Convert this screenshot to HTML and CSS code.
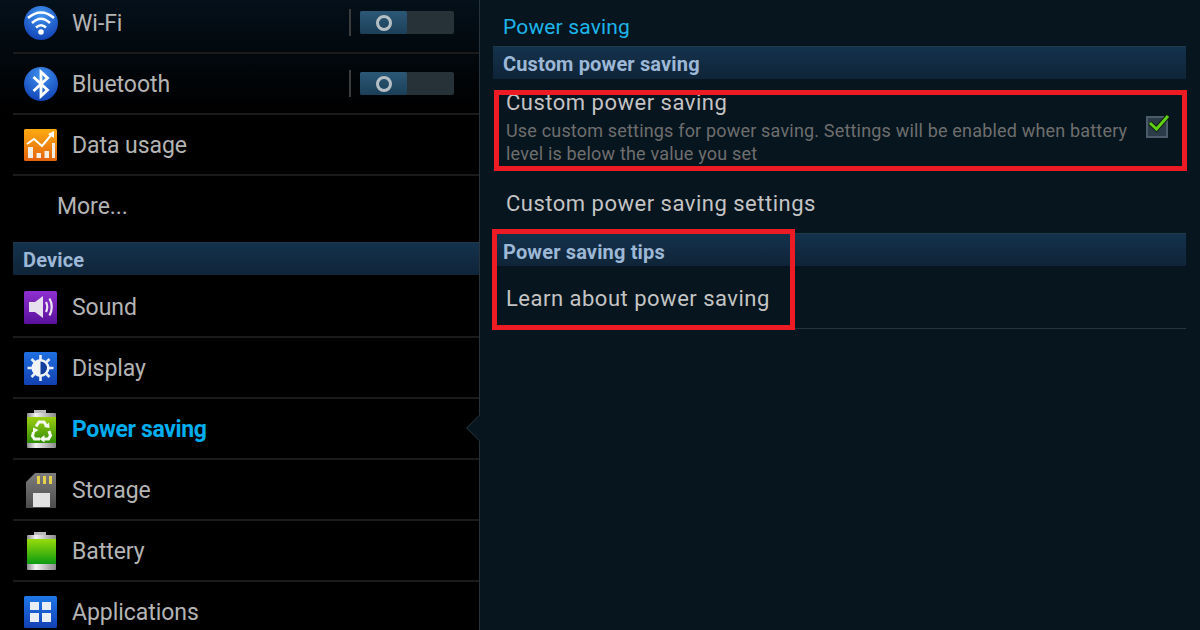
FILE: index.html
```html
<!DOCTYPE html>
<html lang="en">
<head>
    <meta charset="UTF-8">
    <meta name="viewport" content="width=device-width, initial-scale=1.0">
    <title>Power saving</title>
    <link rel="stylesheet" href="styles.css">
</head>
<body>
    <div class="screen">
        <div class="sidebar">
            <div class="menu-row">
                <svg class="icon" viewBox="0 0 40 40">
                    <defs><radialGradient id="wifiBlue" cx="50%" cy="25%" r="80%"><stop offset="0" stop-color="#3f93ee"/><stop offset="1" stop-color="#0f3fb4"/></radialGradient></defs>
                    <circle cx="20" cy="20" r="17" fill="url(#wifiBlue)"/>
                    <path d="M7 15 Q20 4 33 15 M11 20 Q20 11.500 29 20 M15 24.500 Q20 20 25 24.500" fill="none" stroke="#fff" stroke-width="2.600"/>
                    <circle cx="20" cy="29" r="2.800" fill="#fff"/>
                </svg>
                <span class="menu-label">Wi-Fi</span>
                <div class="switch-wrap">
                    <div class="switch"><div class="switch-on"><span class="ring"></span></div></div>
                </div>
            </div>
            <div class="menu-row">
                <svg class="icon" viewBox="0 0 40 40">
                    <defs><radialGradient id="btBlue" cx="50%" cy="25%" r="80%"><stop offset="0" stop-color="#3f93ee"/><stop offset="1" stop-color="#0f3fb4"/></radialGradient></defs>
                    <circle cx="20" cy="20" r="17" fill="url(#btBlue)"/>
                    <path d="M12.500 13 L26.500 26 L20 32 L20 8 L26.500 14 L12.500 27" fill="none" stroke="#fff" stroke-width="2.800"/>
                </svg>
                <span class="menu-label">Bluetooth</span>
                <div class="switch-wrap">
                    <div class="switch"><div class="switch-on"><span class="ring"></span></div></div>
                </div>
            </div>
            <div class="menu-row">
                <svg class="icon" viewBox="0 0 40 40">
                    <defs><linearGradient id="dataOrange" x1="0" y1="0" x2="0" y2="1"><stop offset="0" stop-color="#fcab10"/><stop offset="1" stop-color="#e4620c"/></linearGradient></defs>
                    <rect x="3" y="4" width="33" height="32" rx="1.500" fill="url(#dataOrange)"/>
                    <path d="M7 33 V22 H12 V33 Z M15.500 33 V28 H20 V33 Z M23.500 33 V26 H28 V33 Z M31 33 V18 H34 V33 Z" fill="#f3ece2"/>
                    <path d="M6 19 L13 14 L21 21 L31 9" fill="none" stroke="#fff" stroke-width="2"/>
                    <path d="M27 9 L33 6 L33 13 Z" fill="#fff"/>
                </svg>
                <span class="menu-label">Data usage</span>
            </div>
            <div class="menu-row menu-row-plain">
                <span class="menu-label">More...</span>
            </div>

            <div class="section-head section-head-side">Device</div>

            <div class="menu-row">
                <svg class="icon" viewBox="0 0 40 40">
                    <defs><linearGradient id="soundPurple" x1="0" y1="0" x2="0" y2="1"><stop offset="0" stop-color="#8e2fd0"/><stop offset="1" stop-color="#5a119c"/></linearGradient></defs>
                    <rect x="3" y="4" width="33" height="33" rx="1.500" fill="url(#soundPurple)"/>
                    <path d="M8 15 H14 L22 9 V31 L14 25 H8 Z" fill="#e6e0ee"/>
                    <path d="M25 15 Q27.500 20 25 25 M28.500 11.500 Q33 20 28.500 28.500" fill="none" stroke="#ece6f2" stroke-width="2.200"/>
                </svg>
                <span class="menu-label">Sound</span>
            </div>
            <div class="menu-row">
                <svg class="icon" viewBox="0 0 40 40">
                    <defs><linearGradient id="displayBlue" x1="0" y1="0" x2="0" y2="1"><stop offset="0" stop-color="#1f6fe0"/><stop offset="1" stop-color="#1240b0"/></linearGradient></defs>
                    <rect x="3" y="4" width="33" height="33" rx="1.500" fill="url(#displayBlue)"/>
                    <path d="M19.500 7 V33 M6.500 20 H32.500 M10.500 11 L28.500 29 M28.500 11 L10.500 29" stroke="#e8edf5" stroke-width="2.600"/>
                    <circle cx="19.500" cy="20" r="9" fill="#f1f3f6"/>
                    <path d="M19.500 13.500 A6.500 6.500 0 0 1 19.500 26.500 Z" fill="#123f9e"/>
                </svg>
                <span class="menu-label">Display</span>
            </div>
            <div class="menu-row menu-row-active">
                <svg class="icon" viewBox="0 0 40 40">
                    <defs>
                        <linearGradient id="recycleMetal" x1="0" y1="0" x2="1" y2="0"><stop offset="0" stop-color="#8d8d8d"/><stop offset=".3" stop-color="#f2f2f2"/><stop offset="1" stop-color="#8a8a8a"/></linearGradient>
                        <linearGradient id="recycleGreen" x1="0" y1="0" x2="0" y2="1"><stop offset="0" stop-color="#9ccf10"/><stop offset="1" stop-color="#2f8c06"/></linearGradient>
                    </defs>
                    <rect x="13" y="1" width="12" height="4" fill="#b9b9b9"/>
                    <rect x="6" y="4" width="29" height="35" rx="1" fill="url(#recycleMetal)"/>
                    <rect x="6" y="8" width="29" height="26" fill="url(#recycleGreen)"/>
                    <path d="M15 17.500 L18 13 H23 L25.500 17 M12.500 23 L11.500 27 L13.500 30 H19 M28 22 L29.500 26.500 L27.500 30 H23" fill="none" stroke="#f4f8ee" stroke-width="3"/>
                    <path d="M23 18 L28.500 19 L28 13.500 Z M12 18.500 L17.500 21 L12 24.500 Z M23.500 26 L18.500 30 L23.500 33.500 Z" fill="#f4f8ee"/>
                </svg>
                <span class="menu-label">Power saving</span>
            </div>
            <div class="menu-row">
                <svg class="icon" viewBox="0 0 40 40">
                    <defs><linearGradient id="sdGrey" x1="0" y1="0" x2="0" y2="1"><stop offset="0" stop-color="#7d7d7d"/><stop offset="1" stop-color="#4c4c4c"/></linearGradient></defs>
                    <path d="M14 3 H35 V38 H5 V12 Z" fill="url(#sdGrey)"/>
                    <path d="M16 6 H19 V14 H16 Z M22 6 H25 V14 H22 Z M28 6 H31 V14 H28 Z" fill="#e6d24a"/>
                    <rect x="12" y="23" width="17" height="14" fill="#e2e2e2"/>
                </svg>
                <span class="menu-label">Storage</span>
            </div>
            <div class="menu-row">
                <svg class="icon" viewBox="0 0 40 40">
                    <defs>
                        <linearGradient id="battMetal" x1="0" y1="0" x2="1" y2="0"><stop offset="0" stop-color="#8d8d8d"/><stop offset=".3" stop-color="#f2f2f2"/><stop offset="1" stop-color="#8a8a8a"/></linearGradient>
                        <linearGradient id="battGreen" x1="0" y1="0" x2="0" y2="1"><stop offset="0" stop-color="#98dc0a"/><stop offset="1" stop-color="#0c9a12"/></linearGradient>
                    </defs>
                    <rect x="13" y="1" width="12" height="4" fill="#b9b9b9"/>
                    <rect x="6" y="4" width="29" height="35" rx="1" fill="url(#battMetal)"/>
                    <rect x="6" y="8" width="29" height="25" fill="url(#battGreen)"/>
                </svg>
                <span class="menu-label">Battery</span>
            </div>
            <div class="menu-row">
                <svg class="icon" viewBox="0 0 40 40">
                    <defs><linearGradient id="appsBlue" x1="0" y1="0" x2="0" y2="1"><stop offset="0" stop-color="#1f78e8"/><stop offset="1" stop-color="#1240b4"/></linearGradient></defs>
                    <rect x="3" y="4" width="33" height="32" rx="1.500" fill="url(#appsBlue)"/>
                    <path d="M9 10 H18 V18 H9 Z M21 10 H30 V18 H21 Z M9 21 H18 V30 H9 Z M21 21 H30 V30 H21 Z" fill="#e9edf4"/>
                </svg>
                <span class="menu-label">Applications</span>
            </div>
        </div>

        <div class="detail">
            <h1 class="detail-title">Power saving</h1>
            <div class="section-head">Custom power saving</div>
            <div class="pref pref-tall">
                <div class="pref-text">
                    <div class="pref-name">Custom power saving</div>
                    <div class="pref-desc">Use custom settings for power saving. Settings will be enabled when battery level is below the value you set</div>
                </div>
                <svg class="check" viewBox="0 0 26 26">
                    <rect x="2" y="5" width="20" height="20" fill="#2c3b48" stroke="#4b5b69" stroke-width="2"/>
                    <path d="M5 11 L11.500 17 L23 4" fill="none" stroke="#0d1a10" stroke-width="5"/>
                    <path d="M5 11 L11.500 17 L23 4" fill="none" stroke="#5fd012" stroke-width="3"/>
                </svg>
            </div>
            <div class="pref pref-short">
                <div class="pref-name">Custom power saving settings</div>
            </div>
            <div class="section-head section-head-tips">Power saving tips</div>
            <div class="pref pref-learn">
                <div class="pref-name">Learn about power saving</div>
            </div>
        </div>

        <div class="pane-notch"></div>
        <div class="mark mark-custom"></div>
        <div class="mark mark-tips"></div>
    </div>
</body>
</html>
```

FILE: styles.css
```css
html, body {
    margin: 0;
    padding: 0;
    background-color: #000;
}
.screen {
    position: relative;
    display: flex;
    width: 1200px;
    height: 630px;
    overflow: hidden;
    font-family: Roboto, "Liberation Sans", sans-serif;
}

/* left list */
.sidebar {
    width: 466px;
    height: 630px;
    padding-left: 13px;
    border-right: 1px solid #26333d;
    background: linear-gradient(#04101a 0, #000 110px);
    flex-shrink: 0;
}
.menu-row {
    display: flex;
    align-items: center;
    height: 59px;
    padding-left: 8px;
    border-bottom: 2px solid #1b1b1b;
}
.menu-row:first-child {
    margin-top: -7px;
}
.menu-row:nth-child(4) {
    height: 66px;
    border-bottom: none;
}
.menu-row-plain {
    padding-left: 44px;
    align-items: flex-start;
}
.menu-row-plain .menu-label {
    margin: 15px 0 0 0;
}
.icon {
    width: 40px;
    height: 40px;
    flex-shrink: 0;
}
.menu-label {
    margin-left: 11px;
    padding-top: 2px;
    font-size: 23px;
    letter-spacing: -0.05px;
    color: #b4b4b4;
}
.menu-row-active .menu-label {
    font-weight: 700;
    color: #00aeef;
    letter-spacing: -0.35px;
}
.switch-wrap {
    display: flex;
    align-items: center;
    height: 27px;
    margin-left: auto;
    margin-right: 25px;
    padding-left: 9px;
    border-left: 2px solid #3c3c3c;
}
.switch {
    width: 94px;
    height: 23px;
    border-radius: 2px;
    background-color: #263238;
}
.switch-on {
    display: flex;
    align-items: center;
    justify-content: center;
    width: 47px;
    height: 23px;
    border-radius: 2px;
    background: linear-gradient(#2c5876, #1c3f58);
}
.ring {
    width: 10px;
    height: 10px;
    border: 3px solid #b5c0c6;
    border-radius: 50%;
}

/* section headers */
.section-head {
    height: 32px;
    padding-left: 10px;
    border-top: 1px solid #21394c;
    background: linear-gradient(#14324c, #0f2438);
    font-size: 20px;
    font-weight: 700;
    line-height: 35px;
    letter-spacing: 0.15px;
    color: #9db8d6;
}
.section-head-side {
    margin-bottom: 2px;
    line-height: 34px;
}
.section-head-tips {
    line-height: 37px;
}

/* right pane */
.detail {
    flex: 1;
    height: 630px;
    padding: 0 14px 0 13px;
    background-color: #07151e;
}
.detail-title {
    margin: 0;
    height: 46px;
    padding-left: 10px;
    font-size: 21px;
    font-weight: 400;
    line-height: 55px;
    letter-spacing: 0.15px;
    color: #1db5ec;
}
.pref {
    display: flex;
    align-items: center;
    padding-left: 13px;
    border-bottom: 1px solid #26343f;
}
.pref-tall {
    height: 91px;
    align-items: flex-start;
    justify-content: space-between;
    box-sizing: border-box;
}
.pref-short {
    height: 59px;
    padding-top: 4px;
    border-bottom: none;
}
.pref-learn {
    height: 60px;
    padding-top: 2px;
}
.pref-text {
    width: 630px;
    padding-top: 8px;
}
.pref-name {
    font-size: 22px;
    letter-spacing: 0.5px;
    line-height: 29px;
    color: #c4c4c4;
}
.pref-text .pref-name {
    line-height: 32px;
}
.pref-desc {
    font-size: 18px;
    letter-spacing: 0.18px;
    line-height: 23px;
    color: #6e6e6e;
}
.check {
    width: 26px;
    height: 26px;
    margin: 33px 15px 0 0;
}

/* things lying over the panes */
.pane-notch {
    position: absolute;
    left: 470px;
    top: 418px;
    width: 20px;
    height: 20px;
    transform: rotate(45deg);
    background-color: #07151e;
    border-left: 1px solid #26333d;
    border-bottom: 1px solid #26333d;
    box-sizing: border-box;
    clip-path: polygon(0 0, 100% 100%, 0 100%);
}
.mark {
    position: absolute;
    border: 5px solid #ed1c24;
    box-sizing: border-box;
}
.mark-custom {
    left: 494px;
    top: 90px;
    width: 693px;
    height: 81px;
}
.mark-tips {
    left: 492px;
    top: 229px;
    width: 303px;
    height: 101px;
}
```
